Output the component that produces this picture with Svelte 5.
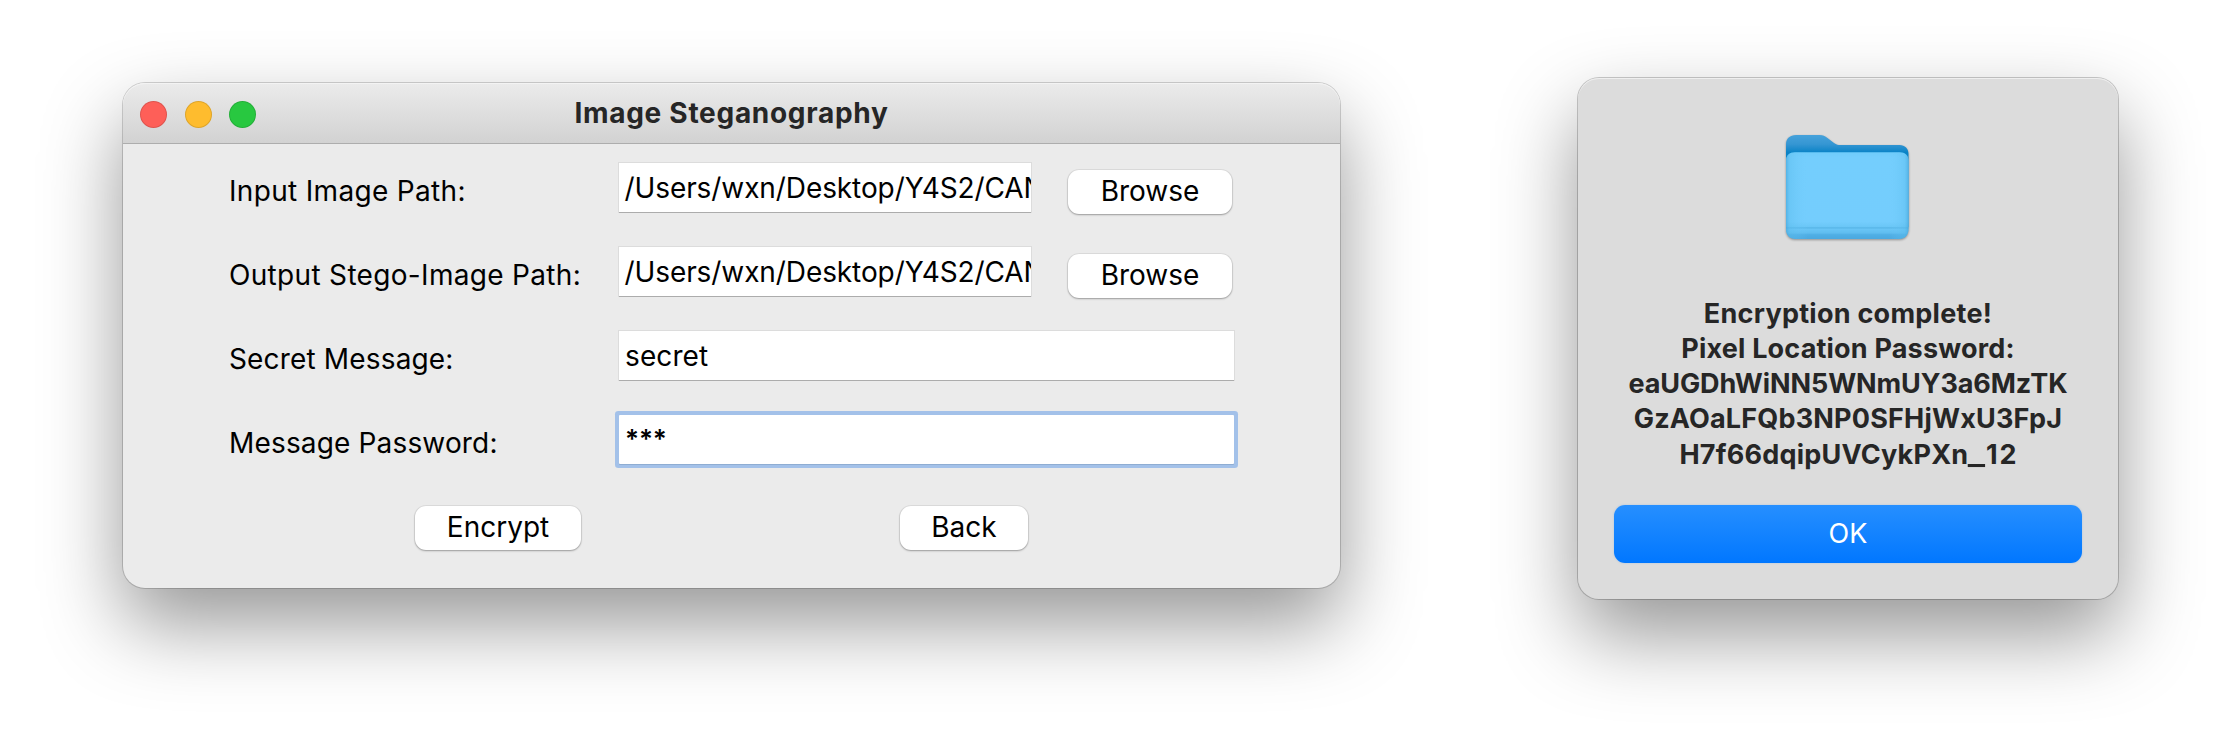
<script>
  let inputPath = $state('/Users/wxn/Desktop/Y4S2/CAN');
  let outputPath = $state('/Users/wxn/Desktop/Y4S2/CAN');
  let message = $state('secret');
  const masked = '***';

  // Each line of the alert carries its own tracking, in pixels.
  const alertLines = [
    { text: 'Encryption complete!', tracking: 0.26 },
    { text: 'Pixel Location Password:', tracking: 0.18 },
    { text: 'eaUGDhWiNN5WNmUY3a6MzTK', tracking: -0.09 },
    { text: 'GzAOaLFQb3NP0SFHjWxU3FpJ', tracking: 0.19 },
  ];
</script>

<main class="desktop">
  <section class="window">
    <header class="titlebar">
      <div class="lights">
        <span class="light close"></span>
        <span class="light minimise"></span>
        <span class="light zoom"></span>
      </div>
      <h1>Image Steganography</h1>
    </header>

    <div class="form">
      <div class="row">
        <span class="label wide">Input Image Path:</span>
        <div class="field short">{inputPath}</div>
        <button class="push browse">Browse</button>
      </div>
      <div class="row">
        <span class="label wide">Output Stego-Image Path:</span>
        <div class="field short">{outputPath}</div>
        <button class="push browse">Browse</button>
      </div>
      <div class="row">
        <span class="label">Secret Message:</span>
        <div class="field">{message}</div>
      </div>
      <div class="row">
        <span class="label">Message Password:</span>
        <div class="field focused">{masked}</div>
      </div>
      <div class="row actions">
        <button class="push encrypt">Encrypt</button>
        <button class="push back">Back</button>
      </div>
    </div>
  </section>

  <section class="alert">
    <svg class="folder" width="134" height="116" viewBox="0 0 134 116">
      <defs>
        <linearGradient id="backFill" x1="0" y1="0" x2="0" y2="1">
          <stop offset="0" stop-color="#46a2db" />
          <stop offset="0.1" stop-color="#3596d3" />
          <stop offset="0.19" stop-color="#0a83c6" />
          <stop offset="1" stop-color="#0a7dbe" />
        </linearGradient>
        <linearGradient id="frontFill" x1="0" y1="0" x2="0" y2="1">
          <stop offset="0" stop-color="#6fccfa" />
          <stop offset="0.06" stop-color="#74cefd" />
          <stop offset="0.8" stop-color="#74cdfd" />
          <stop offset="0.86" stop-color="#6ac6f6" />
          <stop offset="0.87" stop-color="#58b6e8" />
          <stop offset="0.89" stop-color="#68c4f5" />
          <stop offset="0.93" stop-color="#60bdef" />
          <stop offset="0.95" stop-color="#50afe5" />
          <stop offset="1" stop-color="#4ba8df" />
        </linearGradient>
        <linearGradient id="sideFill" x1="0" y1="0" x2="1" y2="0">
          <stop offset="0" stop-color="#45a7dc" stop-opacity="0.7" />
          <stop offset="0.03" stop-color="#5bbcec" stop-opacity="0.4" />
          <stop offset="0.18" stop-color="#74cefd" stop-opacity="0" />
          <stop offset="0.84" stop-color="#74cefd" stop-opacity="0" />
          <stop offset="0.97" stop-color="#5bbcec" stop-opacity="0.4" />
          <stop offset="1" stop-color="#45a7dc" stop-opacity="0.7" />
        </linearGradient>
      </defs>
      <path fill="url(#backFill)" d="M5 12.500C5 6.500 9 3 15 3H38.500C42 3 44 4 46.500 6L53 11C55.500 12.700 57 13 60 13H118.500C124 13 127.500 16.500 127.500 22V95H5Z" />
      <path fill="url(#frontFill)" d="M5 29C5 23 8.500 20.200 14 20.200H118.500C124 20.200 127.500 23 127.500 29V97C127.500 103 124 107 118 107H14.500C8.500 107 5 103 5 97Z" />
      <path fill="url(#sideFill)" d="M5 29C5 23 8.500 20.200 14 20.200H118.500C124 20.200 127.500 23 127.500 29V97C127.500 103 124 107 118 107H14.500C8.500 107 5 103 5 97Z" />
    </svg>
    <div class="message">
      {#each alertLines as line}
        <div class="line" style:letter-spacing="{line.tracking}px">{line.text}</div>
      {/each}
      <div class="line last">H7f66dqipUVCykPXn<span class="underscore">_</span><span class="digits">12</span></div>
    </div>
    <button class="ok">OK</button>
  </section>
</main>

<style>
  :global(body) {
    background: #fff;
  }

  .desktop {
    box-sizing: border-box;
    width: 2234px;
    height: 752px;
    display: flex;
    align-items: flex-start;
    gap: 238px;
    padding: 78px 0 0 123px;
    overflow: hidden;
    font-family: Inter, 'Liberation Sans', sans-serif;
    font-size: 28px;
    color: #000;
  }

  .window,
  .alert {
    flex: none;
    box-sizing: border-box;
    box-shadow:
      0 0 0 1px rgba(0, 0, 0, 0.17),
      0 36px 80px rgba(0, 0, 0, 0.41);
  }

  .window {
    width: 1217px;
    height: 505px;
    margin-top: 5px;
    border-radius: 22px;
    background: #ebebeb;
  }

  .titlebar {
    box-sizing: border-box;
    height: 61px;
    display: grid;
    grid-template-columns: 1fr auto 1fr;
    align-items: center;
    padding: 0 17px;
    border-bottom: 1px solid #adadad;
    border-radius: 22px 22px 0 0;
    background: linear-gradient(#ebebeb, #d2d2d2);
    box-shadow: inset 0 1px 0 #f3f3f3;
  }

  .lights {
    display: flex;
    gap: 17.500px;
    padding-top: 2px;
  }

  .light {
    box-sizing: border-box;
    width: 27px;
    height: 27px;
    border-radius: 50%;
    border: 1px solid rgba(0, 0, 0, 0.12);
    background-clip: border-box;
  }

  .close {
    background-color: #fe5f58;
  }

  .minimise {
    background-color: #febc2e;
  }

  .zoom {
    background-color: #28c840;
  }

  h1 {
    margin: 0;
    font-size: 28px;
    font-weight: 700;
    line-height: 60px;
    letter-spacing: 0.710px;
    color: #262626;
  }

  .form {
    padding: 19px 0 0 106px;
  }

  .row {
    height: 84px;
    display: flex;
    align-items: flex-start;
  }

  .label {
    width: 390px;
    line-height: 56px;
    letter-spacing: 0.160px;
    white-space: nowrap;
  }

  .wide {
    letter-spacing: 0.320px;
  }

  .field {
    box-sizing: border-box;
    flex: none;
    width: 615px;
    height: 49px;
    padding-left: 6px;
    overflow: hidden;
    white-space: nowrap;
    line-height: 51px;
    letter-spacing: 0.100px;
    background: #fff;
    box-shadow:
      0 1px 0 #acacac,
      0 0 0 1px #dcdcdc;
  }

  .short {
    width: 412px;
    padding-left: 5.500px;
    margin-right: 37px;
    letter-spacing: -0.090px;
  }

  .focused {
    font-size: 26px;
    font-weight: 600;
    line-height: 48px;
    letter-spacing: -0.100px;
    border-radius: 1px;
    box-shadow:
      0 1px 0 #8fadd2,
      0 0 0 4px #a3c1e9;
  }

  .push {
    box-sizing: border-box;
    flex: none;
    height: 44px;
    margin: 7px 0 0;
    padding: 0 0 2px;
    border: 0;
    border-radius: 11px;
    background: #fff;
    font: inherit;
    line-height: 42px;
    color: #000;
    box-shadow:
      0 0 0 1px rgba(0, 0, 0, 0.06),
      0 1px 2px rgba(0, 0, 0, 0.3);
  }

  .browse {
    width: 164px;
  }

  .actions {
    padding-left: 186px;
    gap: 319px;
  }

  .encrypt {
    width: 166px;
  }

  .back {
    width: 128px;
  }

  .alert {
    width: 540px;
    height: 521px;
    display: flex;
    flex-direction: column;
    align-items: center;
    padding-top: 54px;
    border-radius: 21px;
    background: #dcdcdc;
    box-shadow:
      inset 0 1px 0 #efefef,
      0 0 0 1px rgba(0, 0, 0, 0.2),
      0 36px 80px rgba(0, 0, 0, 0.41);
  }

  .folder {
    flex: none;
    filter: drop-shadow(0 1.500px 1px rgba(0, 0, 0, 0.35));
  }

  .message {
    padding-top: 47.500px;
    font-size: 27px;
    font-weight: 700;
    line-height: 35.300px;
    color: #262626;
    text-align: center;
  }

  .last {
    letter-spacing: 0.220px;
  }

  .underscore {
    display: inline-block;
    margin: 0 3px 0 1.500px;
    transform: scaleX(1.35);
  }

  .digits {
    letter-spacing: 2px;
    margin-right: -2px;
  }

  .ok {
    width: 468px;
    height: 58px;
    margin-top: 33px;
    padding: 0 0 1px;
    border: 0;
    border-radius: 11px;
    background: linear-gradient(#268fff, #0177ff);
    font: inherit;
    font-size: 27px;
    color: #fff;
    box-shadow: 0 0 2px rgba(60, 140, 230, 0.35);
  }
</style>
